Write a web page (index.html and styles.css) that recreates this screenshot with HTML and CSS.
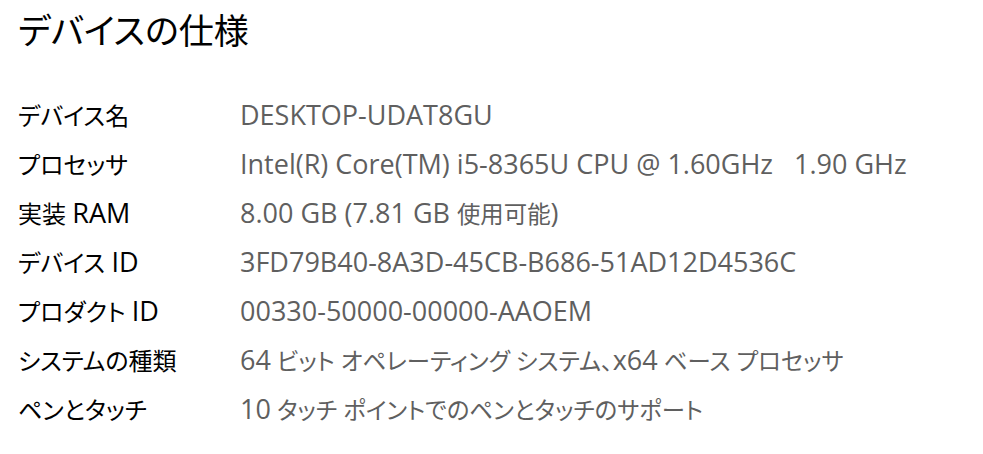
FILE: index.html
```html
<html>

<head>
    <meta charset="utf-8">
    <link rel="stylesheet" href="styles.css">
</head>

<body>
    <div class="page">
        <h1 class="title">デバイスの仕様</h1>
        <div class="specs">
            <div class="label">デバイス名</div>
            <div class="value"><span class="en">DESKTOP-UDAT8GU</span></div>

            <div class="label">プロセッサ</div>
            <div class="value"><span class="en">Intel(R) Core(TM) i5-8365U CPU @ 1.60GHz&nbsp;&nbsp; 1.90 GHz</span></div>

            <div class="label">実装 <span class="en">RAM</span></div>
            <div class="value"><span class="en">8.00 GB (7.81 GB </span>使用可能<span class="en">)</span></div>

            <div class="label">デバイス <span class="en">ID</span></div>
            <div class="value"><span class="en">3FD79B40-8A3D-45CB-B686-51AD12D4536C</span></div>

            <div class="label">プロダクト <span class="en">ID</span></div>
            <div class="value"><span class="en">00330-50000-00000-AAOEM</span></div>

            <div class="label">システムの種類</div>
            <div class="value"><span class="en">64</span> ビット オペレーティング システム、<span class="en">x64</span> ベース プロセッサ</div>

            <div class="label">ペンとタッチ</div>
            <div class="value"><span class="en">10</span> タッチ ポイントでのペンとタッチのサポート</div>
        </div>
    </div>
</body>

</html>
```

FILE: styles.css
```css
body {
    margin: 0px;
    background-color: white;
    font-family: "Open Sans", "Noto Sans CJK JP", sans-serif;
    /* proportional kana, closer to Yu Gothic UI */
    font-feature-settings: "palt";
}

.page {
    padding: 0px 0px 0px 18px;
}

.title {
    margin: 0;
    padding-top: 7px;
    height: 83px;
    font-size: 35px;
    font-weight: normal;
    line-height: 48px;
    color: #000;
}

.specs {
    display: grid;
    grid-template-columns: 222px auto;
    grid-auto-rows: 49px;
    align-items: center;
    font-size: 24px;
}

/* latin runs are set a bit larger than the kana, like Segoe UI next to Yu Gothic */
.en {
    font-size: 27px;
}

.label {
    color: #000;
}

.value {
    color: #5f5f5f;
    font-size: 23.4px;
}
```
